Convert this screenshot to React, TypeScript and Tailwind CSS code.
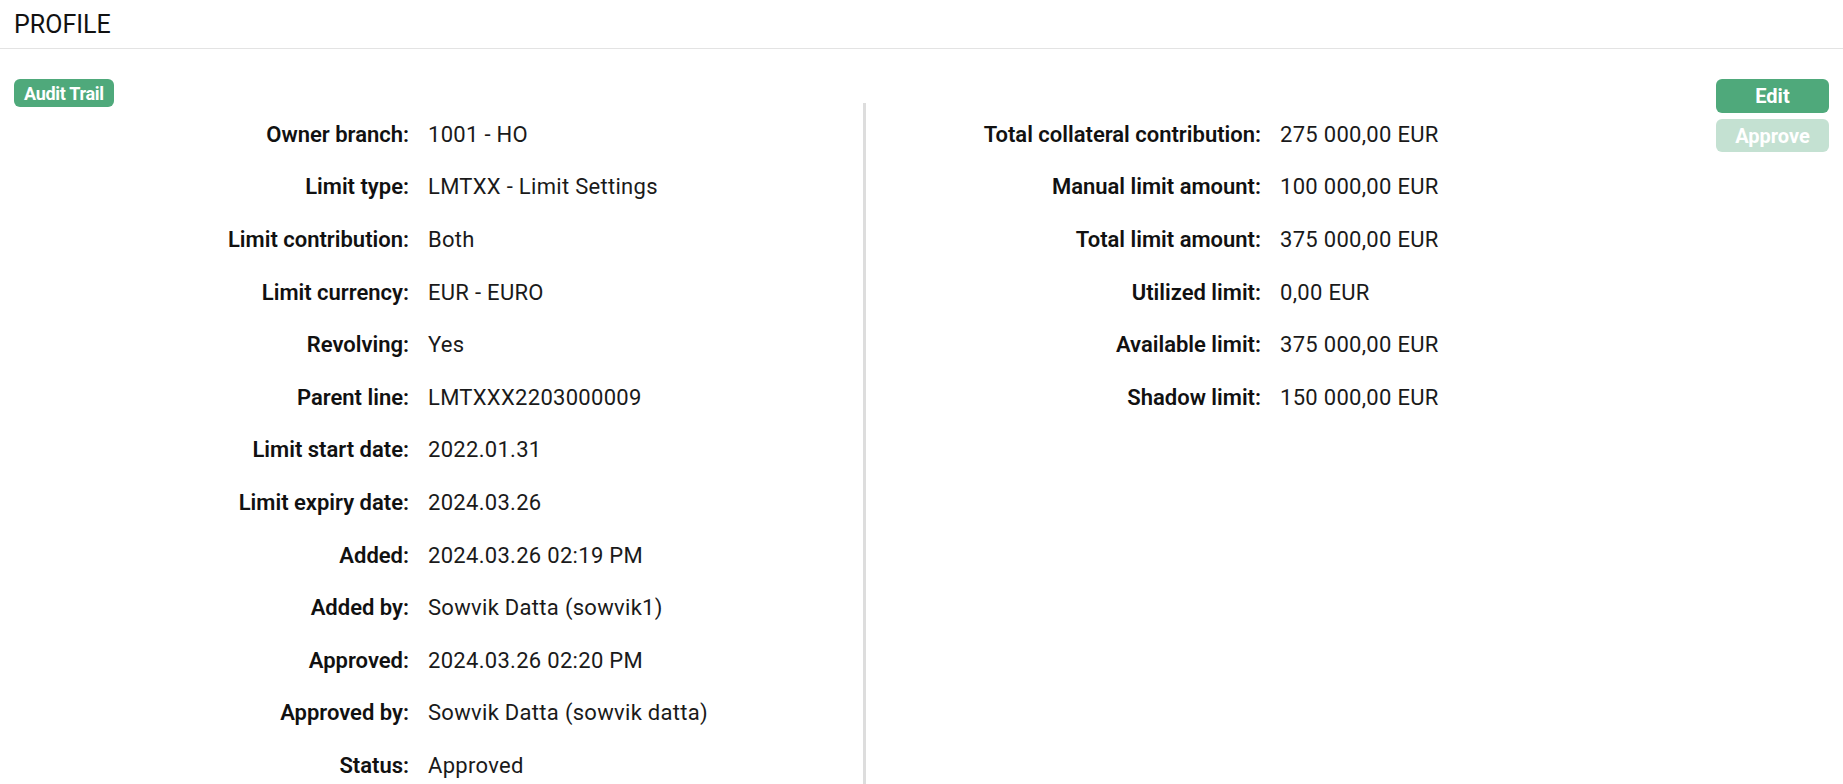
import React from 'react';

const leftRows: [string, string][] = [
  ['Owner branch:', '1001 - HO'],
  ['Limit type:', 'LMTXX - Limit Settings'],
  ['Limit contribution:', 'Both'],
  ['Limit currency:', 'EUR - EURO'],
  ['Revolving:', 'Yes'],
  ['Parent line:', 'LMTXXX2203000009'],
  ['Limit start date:', '2022.01.31'],
  ['Limit expiry date:', '2024.03.26'],
  ['Added:', '2024.03.26 02:19 PM'],
  ['Added by:', 'Sowvik Datta (sowvik1)'],
  ['Approved:', '2024.03.26 02:20 PM'],
  ['Approved by:', 'Sowvik Datta (sowvik datta)'],
  ['Status:', 'Approved'],
];

const rightRows: [string, string][] = [
  ['Total collateral contribution:', '275 000,00 EUR'],
  ['Manual limit amount:', '100 000,00 EUR'],
  ['Total limit amount:', '375 000,00 EUR'],
  ['Utilized limit:', '0,00 EUR'],
  ['Available limit:', '375 000,00 EUR'],
  ['Shadow limit:', '150 000,00 EUR'],
];

function Row({ label, value, labelWidth }: { label: string; value: string; labelWidth: string }) {
  return (
    <div className="flex h-[52.6px] items-center">
      <div className={`${labelWidth} shrink-0 text-right font-semibold text-[22px] text-[#111] tracking-[0px] whitespace-nowrap`}>{label}</div>
      <div className="ml-[19px] text-[22px] text-[#1a1a1a] tracking-[0.3px] whitespace-nowrap">{value}</div>
    </div>
  );
}

export default function App() {
  return (
    <div className="min-h-screen bg-white" style={{ fontFamily: 'Roboto, "Noto Sans", sans-serif' }}>
      {/* Header */}
      <div className="h-[49px] border-b border-[#e3e3e3] px-[14px] flex items-center">
        <h1 className="text-[25px] font-normal text-[#111] leading-none">PROFILE</h1>
      </div>

      <div className="flex">
        <div className="flex-1">
          <div className="h-[54px] pt-[30px] pl-[14px]">
            <button className="h-[28px] px-[10px] rounded-[6px] bg-[#4fa97b] text-white text-[18px] font-bold tracking-[-0.3px]">
              Audit Trail
            </button>
          </div>
          <div className="flex">
            <div className="w-[863px] pt-[5px]">
              {leftRows.map(([l, v]) => (
                <Row key={l} label={l} value={v} labelWidth="w-[409px]" />
              ))}
            </div>
            <div className="w-[3px] bg-[#dddddd] self-stretch min-h-[681px]" />
            <div className="flex-1 pt-[5px]">
              {rightRows.map(([l, v]) => (
                <Row key={l} label={l} value={v} labelWidth="w-[395px]" />
              ))}
            </div>
          </div>
        </div>
        <div className="w-[113px] mr-[14px] pt-[30px] flex flex-col gap-[6px]">
          <button className="h-[34px] rounded-[6px] bg-[#4fa97b] text-white text-[20px] font-bold">Edit</button>
          <button className="h-[33px] rounded-[6px] bg-[#c4e1d2] text-white text-[20px] font-bold">Approve</button>
        </div>
      </div>
    </div>
  );
}
